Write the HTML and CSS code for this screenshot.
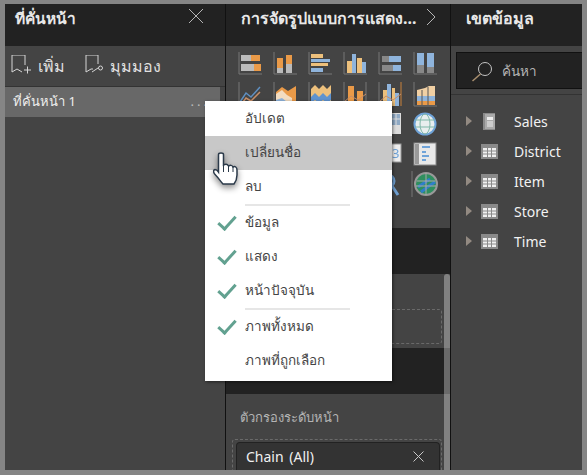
FILE: index.html
```html
<!DOCTYPE html>
<html lang="th">
<head>
    <meta charset="UTF-8">
    <title>Pages</title>
    <link rel="stylesheet" href="styles.css">
</head>
<body>
    <div class="frame">
        <!-- left pane -->
        <section class="pane pages">
            <header class="pane-head">
                <h2>ที่คั่นหน้า</h2>
                <svg class="head-icon" width="16" height="16" viewBox="0 0 16 16"><path d="M1 1 15 15M15 1 1 15" stroke="#b5b5b5" fill="none"/></svg>
            </header>
            <div class="actions">
                <span class="action">
                    <svg width="22" height="22" viewBox="0 2 22 22"><path d="M12 19 7 16 2 19V2H15V12M14 17H21M17.500 13.500V20.500" stroke="#d5d5d5" fill="none"/></svg>
                    เพิ่ม
                </span>
                <span class="action">
                    <svg width="20" height="22" viewBox="0 2 20 22"><path d="M9 16 7 16 2 19V2H14V11" stroke="#d5d5d5" fill="none"/><path d="M8 19 14 15" stroke="#d5d5d5" fill="none"/><circle cx="16.500" cy="15" r="2" stroke="#d5d5d5" fill="none"/></svg>
                    มุมมอง
                </span>
            </div>
            <div class="page-row">
                <span>ที่คั่นหน้า 1</span>
                <span class="dots">...</span>
            </div>
        </section>

        <!-- middle pane -->
        <section class="pane viz">
            <header class="pane-head">
                <h2>การจัดรูปแบบการแสดง...</h2>
                <svg class="head-chevron" width="10" height="18" viewBox="0 0 10 18"><path d="M1 1 9 9 1 17" stroke="#b5b5b5" fill="none"/></svg>
            </header>
            <div class="gallery">
                <svg class="chart" viewBox="0 0 24 24"><path d="M1 0V22H24" stroke="#777" fill="none"/><rect x="3" y="3" width="10" height="6" fill="#bbb"/><rect x="13" y="3" width="9" height="6" fill="#ea9a48"/><rect x="3" y="12" width="13" height="7" fill="#bbb"/><rect x="16" y="12" width="7" height="7" fill="#ea9a48"/></svg>
                <svg class="chart" viewBox="0 0 24 24"><path d="M1 0V22H24" stroke="#777" fill="none"/><rect x="4" y="6" width="6" height="10" fill="#ea9a48"/><rect x="4" y="16" width="6" height="5" fill="#bbb"/><rect x="13" y="3" width="6" height="9" fill="#ea9a48"/><rect x="13" y="12" width="6" height="9" fill="#bbb"/></svg>
                <svg class="chart" viewBox="0 0 24 24"><path d="M1 0V22H24" stroke="#777" fill="none"/><rect x="3" y="2" width="12" height="4" fill="#edc07c"/><rect x="3" y="7" width="19" height="3" fill="#8fb4dc"/><rect x="3" y="11" width="17" height="3" fill="#edc07c"/><rect x="3" y="16" width="12" height="4" fill="#8fb4dc"/></svg>
                <svg class="chart" viewBox="0 0 24 24"><path d="M1 0V22H24" stroke="#777" fill="none"/><rect x="4" y="9" width="5" height="12" fill="#edc07c"/><rect x="9" y="2" width="4" height="19" fill="#8fb4dc"/><rect x="14" y="6" width="5" height="15" fill="#edc07c"/><rect x="19" y="10" width="4" height="11" fill="#8fb4dc"/></svg>
                <svg class="chart" viewBox="0 0 24 24"><path d="M1 0V22H24" stroke="#777" fill="none"/><rect x="4" y="4" width="7" height="6" fill="#888"/><rect x="11" y="4" width="12" height="6" fill="#8fb4dc"/><rect x="4" y="13" width="11" height="6" fill="#888"/><rect x="15" y="13" width="8" height="6" fill="#8fb4dc"/></svg>
                <svg class="chart" viewBox="0 0 24 24"><path d="M1 0V22H24" stroke="#777" fill="none"/><rect x="4" y="1" width="7" height="12" fill="#8fb4dc"/><rect x="4" y="13" width="7" height="8" fill="#888"/><rect x="14" y="1" width="7" height="14" fill="#8fb4dc"/><rect x="14" y="15" width="7" height="6" fill="#888"/></svg>

                <svg class="chart" viewBox="0 0 24 24"><path d="M1 0V22" stroke="#777" fill="none"/><path d="M2 20 8 11 13 15 22 5" stroke="#5f8fc0" stroke-width="1.500" fill="none"/><path d="M2 24 8 16 13 19 22 10" stroke="#c98f68" stroke-width="1.500" fill="none"/></svg>
                <svg class="chart" viewBox="0 0 24 24"><path d="M1 0V24" stroke="#777" fill="none"/><path d="M3 10 9 5 15 9 23 4V24H3Z" fill="#ea9a48"/><path d="M3 12 9 8 14 13 19 16V24H3Z" fill="#f3dcc0"/><path d="M3 18 9 16 14 20V24H3Z" fill="#8fb4dc"/></svg>
                <svg class="chart" viewBox="0 0 24 24"><path d="M1 0V24" stroke="#777" fill="none"/><path d="M3 7 7 3 11 7 15 3 19 7 23 3V24H3Z" fill="#edc07c"/><path d="M3 15 7 11 11 15 15 11 19 15 23 11V24H3Z" fill="#5f93cf"/><path d="M3 21 7 18 11 21 15 18 19 21 23 18V24H3Z" fill="#edc07c"/></svg>
                <svg class="chart" viewBox="0 0 24 24"><path d="M1 0V24M23 0V24" stroke="#777" fill="none"/><rect x="5" y="4" width="6" height="20" fill="#ea9a48"/><rect x="14" y="9" width="6" height="15" fill="#ea9a48"/><path d="M1 20 8 14 15 18 23 12" stroke="#c98f68" fill="none"/></svg>
                <svg class="chart" viewBox="0 0 24 24"><path d="M1 0V24" stroke="#777" fill="none"/><path d="M23 0V24" stroke="#c9813a" fill="none"/><rect x="5" y="8" width="4" height="16" fill="#edc07c"/><rect x="9" y="2" width="4" height="22" fill="#8fb4dc"/><rect x="14" y="6" width="3" height="18" fill="#edc07c"/><rect x="17" y="11" width="4" height="13" fill="#8fb4dc"/><path d="M1 20 8 14 15 18 23 12" stroke="#c98f68" fill="none"/></svg>
                <svg class="chart" viewBox="0 0 24 24"><path d="M1 0V24H24" stroke="#777" fill="none"/><path d="M4 8 12 6 16 4H22V14H4Z" fill="#f1d0a4"/><rect x="4" y="14" width="18" height="5" fill="#8fb4dc"/><rect x="4" y="19" width="18" height="4" fill="#ea9a48"/><path d="M9 8V23M15 5V23" stroke="#555" fill="none"/></svg>

                <svg class="chart hidden" viewBox="0 0 24 24"></svg>
                <svg class="chart hidden" viewBox="0 0 24 24"></svg>
                <svg class="chart hidden" viewBox="0 0 24 24"></svg>
                <svg class="chart hidden" viewBox="0 0 24 24"></svg>
                <svg class="chart" viewBox="0 0 24 24"><rect x="8" y="1" width="15" height="21" fill="#ddd"/><rect x="13" y="2" width="9" height="11" fill="#8fa9c4"/><path d="M13 7H22M18 2V13" stroke="#ddd" fill="none"/></svg>
                <svg class="chart" viewBox="0 0 24 24"><circle cx="12" cy="12" r="10.500" fill="#e8eeee" stroke="#6fa3d8" stroke-width="2"/><ellipse cx="12" cy="12" rx="5" ry="10" fill="none" stroke="#7fb7a8"/><path d="M2 8H22M2 15H22" stroke="#7fb7a8" fill="none"/></svg>

                <svg class="chart hidden" viewBox="0 0 24 24"></svg>
                <svg class="chart hidden" viewBox="0 0 24 24"></svg>
                <svg class="chart hidden" viewBox="0 0 24 24"></svg>
                <svg class="chart hidden" viewBox="0 0 24 24"></svg>
                <svg class="chart" viewBox="0 0 24 24"><rect x="8" y="2" width="15" height="18" fill="#eee" stroke="#999"/><text x="14" y="16" class="chart-num">3</text></svg>
                <svg class="chart" viewBox="0 0 24 24"><rect x="1" y="1" width="22" height="22" fill="#e8e8e8" stroke="#888"/><rect x="2" y="2" width="4" height="20" fill="#999"/><path d="M9 5H17M9 10H13M9 14H16M9 18H13" stroke="#6fa3d8" stroke-width="2" fill="none"/></svg>

                <svg class="chart hidden" viewBox="0 0 24 24"></svg>
                <svg class="chart hidden" viewBox="0 0 24 24"></svg>
                <svg class="chart hidden" viewBox="0 0 24 24"></svg>
                <svg class="chart hidden" viewBox="0 0 24 24"></svg>
                <svg class="chart" viewBox="0 0 24 24"><circle cx="10" cy="9" r="6" fill="none" stroke="#6f9fd0" stroke-width="3"/><path d="M14 14 20 23" stroke="#6f9fd0" stroke-width="3" fill="none"/></svg>
                <svg class="chart" viewBox="0 0 24 24"><path d="M-1 -1V25" stroke="#777" fill="none"/><circle cx="13" cy="12" r="11" fill="#2f8f5f" stroke="#999" stroke-width="2"/><path d="M5 15 11 11 17 7M8 20 16 14 22 10" stroke="#2f7fc8" stroke-width="3" fill="none"/><path d="M4 9H22M3 14H23M13 1V23" stroke="#aaa" fill="none"/></svg>
            </div>
            <div class="dark-band"></div>
            <div class="scroll-area">
                <div class="drop-wrap">
                    <div class="drop-zone"></div>
                </div>
                <div class="dark-strip"></div>
                <div class="filter-wrap">
                    <div class="filter-label">ตัวกรองระดับหน้า</div>
                    <div class="filter-outline">
                        <div class="filter-card">
                            <span>Chain (All)</span>
                            <svg width="11" height="11" viewBox="0 0 11 11"><path d="M.5.500 10.500 10.500M10.500.500 .5 10.500" stroke="#c8c8c8" fill="none"/></svg>
                        </div>
                    </div>
                </div>
                <div class="scrollbar"></div>
            </div>
        </section>

        <!-- right pane -->
        <section class="pane fields">
            <header class="pane-head">
                <h2>เขตข้อมูล</h2>
            </header>
            <div class="search-wrap">
                <div class="search">
                    <svg width="24" height="24" viewBox="0 0 24 24"><circle cx="14" cy="10" r="6.500" stroke="#c4c4c4" fill="none"/><path d="M9.500 15 1.500 22" stroke="#a98f6f" stroke-width="1.500" fill="none"/></svg>
                    <span>ค้นหา</span>
                </div>
            </div>
            <ul class="field-list">
                <li>
                    <span class="caret"></span>
                    <svg class="table-icon" width="17" height="17" viewBox="0 0 17 17"><rect x="2" y="0" width="12" height="17" fill="#8a8a8a"/><rect x="4" y="1" width="10" height="15" fill="#aaa"/><rect x="6" y="4" width="6" height="3" fill="#eee"/><path d="M6 9H12M6 11H12M6 13H12" stroke="#eee" fill="none"/></svg>
                    Sales
                </li>
                <li>
                    <span class="caret"></span>
                    <svg class="table-icon" width="17" height="17" viewBox="0 0 17 17"><rect width="17" height="15" y="1" fill="#8a8a8a"/><path d="M2 5H15V14H2Z" fill="#f0f0f0"/><path d="M6.500 5V14M10.500 5V14M2 8H15M2 11H15" stroke="#8a8a8a" fill="none"/></svg>
                    District
                </li>
                <li>
                    <span class="caret"></span>
                    <svg class="table-icon" width="17" height="17" viewBox="0 0 17 17"><rect width="17" height="15" y="1" fill="#8a8a8a"/><path d="M2 5H15V14H2Z" fill="#f0f0f0"/><path d="M6.500 5V14M10.500 5V14M2 8H15M2 11H15" stroke="#8a8a8a" fill="none"/></svg>
                    Item
                </li>
                <li>
                    <span class="caret"></span>
                    <svg class="table-icon" width="17" height="17" viewBox="0 0 17 17"><rect width="17" height="15" y="1" fill="#8a8a8a"/><path d="M2 5H15V14H2Z" fill="#f0f0f0"/><path d="M6.500 5V14M10.500 5V14M2 8H15M2 11H15" stroke="#8a8a8a" fill="none"/></svg>
                    Store
                </li>
                <li>
                    <span class="caret"></span>
                    <svg class="table-icon" width="17" height="17" viewBox="0 0 17 17"><rect width="17" height="15" y="1" fill="#8a8a8a"/><path d="M2 5H15V14H2Z" fill="#f0f0f0"/><path d="M6.500 5V14M10.500 5V14M2 8H15M2 11H15" stroke="#8a8a8a" fill="none"/></svg>
                    Time
                </li>
            </ul>
        </section>

        <!-- context menu -->
        <div class="menu">
            <div class="menu-item">อัปเดต</div>
            <div class="menu-item active">เปลี่ยนชื่อ</div>
            <div class="menu-item">ลบ</div>
            <div class="menu-sep"></div>
            <div class="menu-item checked">ข้อมูล</div>
            <div class="menu-item checked">แสดง</div>
            <div class="menu-item checked">หน้าปัจจุบัน</div>
            <div class="menu-sep"></div>
            <div class="menu-item checked">ภาพทั้งหมด</div>
            <div class="menu-item">ภาพที่ถูกเลือก</div>
        </div>

        <!-- hand cursor -->
        <svg class="cursor" width="25" height="33" viewBox="0 0 25 33">
            <path d="M5.500 2.500C5.500 .5 10.500 .5 10.500 2.500V13C12.500 12 14.500 12 15.500 14C17.500 13 19 13 20 15C22 14 24 15 24 18V23C24 27 22.500 30 21 32H10C8 30 5.500 26 2.500 23C0 20.500 0 18 2 17.500C3.500 17.500 4.500 18.500 5.500 20Z" fill="#fff" stroke="#2b3a4a" stroke-width="1.500"/>
            <path d="M10.500 13V20M15.500 14V20M20 15V20" stroke="#2b3a4a" fill="none"/>
        </svg>
    </div>
</body>
</html>
```

FILE: styles.css
```css
html, body {
    margin: 0;
    padding: 0;
}
body {
    width: 587px;
    height: 475px;
    overflow: hidden;
    background-color: #858585;
    font-family: "Noto Sans", "Liberation Sans", sans-serif;
}
.frame {
    position: relative;
    display: flex;
    gap: 1px;
    width: 577px;
    height: 466px;
    margin: 4px 5px 5px;
    background-color: #111;
    overflow: hidden;
}
.pane {
    display: flex;
    flex-direction: column;
    background-color: #444;
}
.pages {
    width: 220px;
}
.viz {
    width: 224px;
}
.fields {
    width: 131px;
}
.pane-head {
    display: flex;
    align-items: flex-start;
    justify-content: space-between;
    flex: none;
    height: 42px;
    box-sizing: border-box;
    padding: 2px 8px 0 15px;
    background-color: #222;
}
.pages .pane-head {
    padding-left: 10px;
}
.pane-head h2 {
    margin: 0;
    font-size: 16px;
    font-weight: 700;
    line-height: 24px;
    color: #e8e8e8;
    white-space: nowrap;
}
.pages .pane-head h2 {
    font-size: 15.500px;
}
.head-icon {
    margin: 2px 13px 0 0;
}
.head-chevron {
    margin: 2px 6px 0 0;
}
.actions {
    display: flex;
    gap: 19px;
    height: 40px;
    padding-left: 5px;
    align-items: center;
    border-bottom: 1px solid #333;
    font-size: 16px;
    color: #e0e0e0;
}
.action {
    display: flex;
    align-items: center;
    gap: 6px;
}
.page-row {
    display: flex;
    justify-content: space-between;
    width: 215px;
    height: 30px;
    line-height: 29px;
    box-sizing: border-box;
    padding: 0 10px 0 8px;
    background-color: #686868;
    font-size: 13px;
    color: #eee;
}
.dots {
    color: #bbb;
    letter-spacing: 3px;
}
.gallery {
    display: grid;
    grid-template-columns: repeat(6, 24px);
    grid-auto-rows: 24px;
    gap: 6px 11px;
    flex: none;
    height: 182px;
    box-sizing: border-box;
    padding: 6px 0 0 12px;
    background-color: #444;
}
.chart {
    display: block;
    width: 24px;
    height: 24px;
    overflow: visible;
    filter: blur(0.3px);
}
.chart-num {
    font-size: 13px;
    fill: #6fa3d8;
}
.hidden {
    visibility: hidden;
}
.dark-band {
    flex: none;
    height: 46px;
    background-color: #222;
}
.scroll-area {
    position: relative;
    flex: 1;
    display: flex;
    flex-direction: column;
}
.scrollbar {
    position: absolute;
    top: 0;
    right: 0;
    bottom: 0;
    width: 6px;
    border-radius: 3px 3px 0 0;
    background-color: rgba(255, 255, 255, 0.33);
}
.drop-wrap {
    flex: none;
    height: 74px;
    box-sizing: border-box;
    padding: 35px 8px 0 8px;
}
.drop-zone {
    height: 33px;
    border: 1px dashed #6a6a6a;
    border-radius: 3px;
}
.dark-strip {
    flex: none;
    height: 46px;
    background-color: #222;
}
.filter-wrap {
    flex: 1;
    padding: 13px 8px 0 6px;
}
.filter-label {
    font-size: 13px;
    line-height: 20px;
    color: #b4b4b4;
    padding-left: 8px;
}
.filter-outline {
    margin-top: 12px;
    padding: 2px 1px 0 3px;
    border: 1px dashed #6a6a6a;
    border-bottom: none;
    border-radius: 3px 3px 0 0;
    height: 40px;
}
.filter-card {
    display: flex;
    justify-content: space-between;
    align-items: flex-start;
    height: 34px;
    box-sizing: border-box;
    padding: 1px 15px 0 9px;
    border: 1px solid #222;
    border-bottom: none;
    border-radius: 4px 4px 0 0;
    background-color: #333;
    font-size: 14px;
    line-height: 26px;
    word-spacing: 2px;
    color: #f0f0f0;
}
.filter-card svg {
    margin-top: 7px;
}
.search-wrap {
    flex: none;
    height: 42px;
    padding-top: 6px;
    border-bottom: 1px solid #333;
}
.search {
    display: flex;
    align-items: center;
    gap: 7px;
    height: 35px;
    margin-left: 5px;
    padding-left: 14px;
    border: 1px solid #111;
    border-right: none;
    background-color: #222;
    font-size: 13.500px;
    color: #b5b5b5;
}
.field-list {
    list-style: none;
    margin: 11px 0 0;
    padding: 0;
}
.field-list li {
    display: flex;
    align-items: center;
    height: 30px;
    padding-left: 15px;
    font-size: 14px;
    color: #f2f2f2;
}
.caret {
    width: 0;
    height: 0;
    border-left: 6px solid #938a82;
    border-top: 5px solid transparent;
    border-bottom: 5px solid transparent;
}
.table-icon {
    margin: 0 16px 0 9px;
}
.menu {
    position: absolute;
    left: 200px;
    top: 97px;
    width: 187px;
    height: 280px;
    box-sizing: border-box;
    padding-top: 1px;
    background-color: #fff;
    box-shadow: 1px 1px 3px rgba(0, 0, 0, 0.5);
    font-size: 13.500px;
    color: #444;
}
.menu-item {
    position: relative;
    height: 34px;
    line-height: 32px;
    padding-left: 40px;
}
.menu-item.active {
    background-color: #c8c8c8;
}
.menu-item.checked::before {
    content: "";
    position: absolute;
    left: 17px;
    top: 6px;
    width: 7px;
    height: 15px;
    border-right: 3px solid #62a190;
    border-bottom: 3px solid #62a190;
    transform: rotate(42deg);
}
.menu-sep {
    height: 2px;
    margin: 0 40px 0 40px;
    width: 105px;
    background-color: #e6e6e6;
}
.cursor {
    position: absolute;
    left: 208px;
    top: 148px;
    filter: drop-shadow(0 3px 3px rgba(0, 0, 0, 0.45));
}
```
